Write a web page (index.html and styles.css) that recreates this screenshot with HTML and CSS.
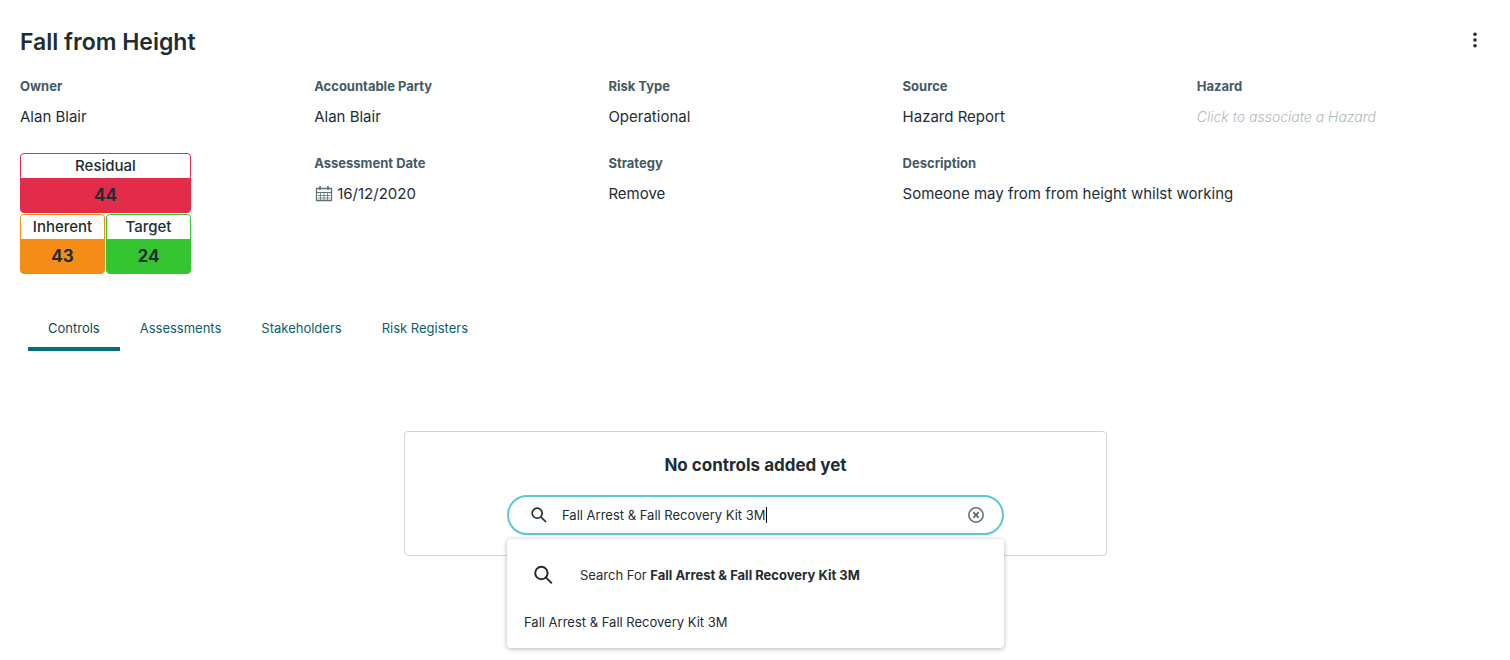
FILE: index.html
```
<!DOCTYPE html>
<html lang="en">
<head>
  <meta charset="UTF-8" />
  <title>Fall from Height</title>
  <link rel="stylesheet" href="styles.css">
</head>
<body>
  <header class="page-header">
    <h1>Fall from Height</h1>
    <button class="icon-button" type="button" aria-label="More options">
      <svg width="6" height="18" viewBox="0 0 6 18" fill="currentColor">
        <circle cx="3" cy="3.2" r="1.8" />
        <circle cx="3" cy="9" r="1.8" />
        <circle cx="3" cy="14.8" r="1.8" />
      </svg>
    </button>
  </header>

  <section class="details">
    <div class="field">
      <h2>Owner</h2>
      <p>Alan Blair</p>
    </div>
    <div class="field">
      <h2>Accountable Party</h2>
      <p>Alan Blair</p>
    </div>
    <div class="field">
      <h2>Risk Type</h2>
      <p>Operational</p>
    </div>
    <div class="field">
      <h2>Source</h2>
      <p>Hazard Report</p>
    </div>
    <div class="field">
      <h2>Hazard</h2>
      <button class="placeholder" type="button">Click to associate a Hazard</button>
    </div>

    <div class="scores">
      <div class="score residual">
        <span class="score-name">Residual</span>
        <span class="score-value">44</span>
      </div>
      <div class="score inherent">
        <span class="score-name">Inherent</span>
        <span class="score-value">43</span>
      </div>
      <div class="score target">
        <span class="score-name">Target</span>
        <span class="score-value">24</span>
      </div>
    </div>
    <div class="field">
      <h2>Assessment Date</h2>
      <p class="date">
        <svg width="18" height="16" viewBox="0 0 18 16" fill="none" stroke="currentColor">
          <path d="M1.5 2.5h15v12h-15z" stroke-width="1.3" />
          <path d="M1.5 6.5h15" />
          <path d="M3 9.5h12M3 12h12M5.5 7v7M9 7v7M12.5 7v7" stroke-width="0.8" />
          <path d="M5 0v4M13 0v4" stroke-width="1.6" />
        </svg>
        16/12/2020
      </p>
    </div>
    <div class="field">
      <h2>Strategy</h2>
      <p>Remove</p>
    </div>
    <div class="field wide">
      <h2>Description</h2>
      <p>Someone may from from height whilst working</p>
    </div>
  </section>

  <nav class="tabs">
    <a class="active" href="#controls">Controls</a>
    <a href="#assessments">Assessments</a>
    <a href="#stakeholders">Stakeholders</a>
    <a href="#registers">Risk Registers</a>
  </nav>

  <section class="empty-card" id="controls">
    <h3>No controls added yet</h3>
    <div class="search">
      <div class="search-box">
        <svg width="16" height="16" viewBox="0 0 16 16" fill="none" stroke="currentColor" stroke-width="1.7">
          <circle cx="6.2" cy="6.2" r="5" />
          <path d="M9.8 9.8l5.2 5.2" />
        </svg>
        <input type="text" aria-label="Search controls" value="Fall Arrest &amp; Fall Recovery Kit 3M" />
        <span class="caret"></span>
        <button class="clear" type="button" aria-label="Clear search">
          <svg width="16" height="16" viewBox="0 0 16 16" fill="none" stroke="currentColor">
            <circle cx="8" cy="8" r="7.2" stroke-width="1.5" />
            <path d="M5.4 5.4l5.2 5.2M10.6 5.4l-5.2 5.2" stroke-width="2" />
          </svg>
        </button>
      </div>
      <div class="results">
        <button class="result search-for" type="button">
          <svg width="20" height="20" viewBox="0 0 20 20" fill="none" stroke="currentColor" stroke-width="2">
            <circle cx="8.4" cy="8" r="6.2" />
            <path d="M12.8 12.4l6 6" />
          </svg>
          <span>Search For <b>Fall Arrest &amp; Fall Recovery Kit 3M</b></span>
        </button>
        <button class="result" type="button">Fall Arrest &amp; Fall Recovery Kit 3M</button>
      </div>
    </div>
  </section>
</body>
</html>
```
FILE: styles.css
```
* {
  box-sizing: border-box;
}
body {
  min-height: 100vh;
  margin: 0;
  padding: 24px 19px 24px 20px;
  font-family: Inter, "Liberation Sans", sans-serif;
  font-size: 15px;
  line-height: 20px;
  color: #1f2d34;
  background-color: #fff;
}
h1, h2, h3, p {
  margin: 0;
}
button, input {
  font: inherit;
  color: inherit;
  background: none;
  border: none;
  padding: 0;
}
button {
  cursor: pointer;
}
svg {
  display: block;
  flex: none;
}

.page-header {
  display: flex;
  justify-content: space-between;
  align-items: center;
  height: 36px;
}
.page-header h1 {
  font-size: 23px;
  font-weight: 600;
}
.icon-button {
  padding: 0 13px 4px;
}

.details {
  display: grid;
  grid-template-columns: repeat(5, 1fr);
  row-gap: 26px;
  margin-top: 16px;
}
.field h2 {
  margin-bottom: 11px;
  font-size: 13px;
  font-weight: 700;
  color: #455a64;
}
.field.wide {
  grid-column: span 2;
}
.date {
  display: flex;
  align-items: center;
  gap: 4px;
}
.date svg {
  margin-left: 1px;
  color: #607078;
}
.placeholder {
  display: block;
  font-size: 14px;
  font-style: italic;
  font-weight: 300;
  color: #b0b8be;
}

.scores {
  display: grid;
  grid-template-columns: 1fr 1fr;
  gap: 1px;
  width: 171px;
}
.score {
  display: flex;
  flex-direction: column;
  border: 1px solid;
  border-radius: 4px;
  overflow: hidden;
  text-align: center;
}
.score-name {
  background-color: #fff;
  font-weight: 500;
  line-height: 24px;
}
.score-value {
  font-size: 17px;
  font-weight: 700;
  line-height: 34px;
}
.residual {
  grid-column: span 2;
  border-color: #e22c4a;
  background-color: #e22c4a;
}
.inherent {
  border-color: #f48c18;
  background-color: #f48c18;
}
.target {
  border-color: #34c530;
  background-color: #34c530;
}

.tabs {
  display: flex;
  margin: 32px 8px 0;
}
.tabs a {
  padding: 12px 20px 9px;
  border-bottom: 4px solid transparent;
  font-size: 13px;
  color: #0d6069;
  text-decoration: none;
}
.tabs .active {
  border-bottom-color: #00707a;
  color: #0a4d55;
}

.empty-card {
  display: flex;
  flex-direction: column;
  align-items: center;
  max-width: 703px;
  margin: 80px auto 0;
  padding: 23px 20px 20px;
  border: 1px solid #d0d5d9;
  border-radius: 4px;
}
.empty-card h3 {
  font-size: 17px;
  font-weight: 700;
}
.search {
  position: relative;
  width: 100%;
  max-width: 497px;
  margin-top: 20px;
  font-size: 13px;
}
.search-box {
  display: flex;
  align-items: center;
  height: 40px;
  padding: 0 18px 0 22px;
  border: 2px solid #5cc8d0;
  border-radius: 20px;
}
.search-box input {
  field-sizing: content;
  margin-left: 15px;
  outline: none;
}
.caret {
  width: 1px;
  height: 16px;
  background-color: #000;
}
.clear {
  margin-left: auto;
  color: #5c6b73;
}

/* suggestion list hangs below the search box */
.results {
  position: absolute;
  top: 44px;
  left: 0;
  width: 100%;
  padding: 12px 0 4px;
  border-radius: 4px;
  background-color: #fff;
  box-shadow: 0 1px 5px rgba(0, 0, 0, 0.3);
}
.result {
  display: flex;
  align-items: center;
  width: 100%;
  height: 45px;
  padding: 0 17px;
  text-align: left;
}
.search-for {
  height: 48px;
  padding-left: 26px;
  gap: 27px;
}
.search-for b {
  font-weight: 700;
}
```
